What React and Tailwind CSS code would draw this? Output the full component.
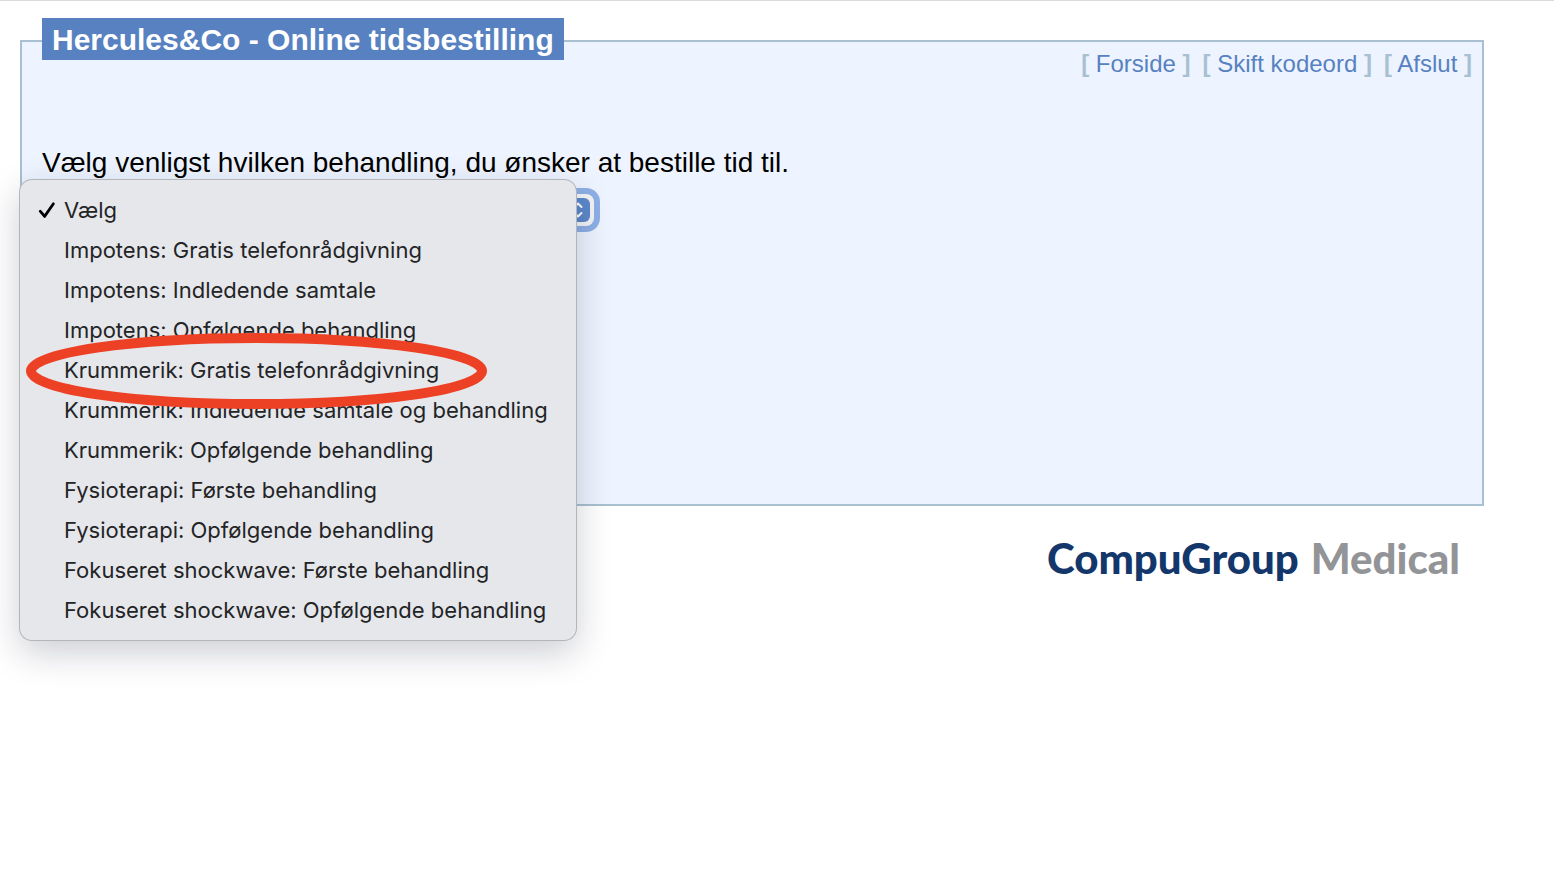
import { useState } from "react";

const treatments = [
  "Vælg",
  "Impotens: Gratis telefonrådgivning",
  "Impotens: Indledende samtale",
  "Impotens: Opfølgende behandling",
  "Krummerik: Gratis telefonrådgivning",
  "Krummerik: Indledende samtale og behandling",
  "Krummerik: Opfølgende behandling",
  "Fysioterapi: Første behandling",
  "Fysioterapi: Opfølgende behandling",
  "Fokuseret shockwave: Første behandling",
  "Fokuseret shockwave: Opfølgende behandling",
];

const highlighted = "Krummerik: Gratis telefonrådgivning";

const NavLink = ({ children }) => (
  <span className="text-[#a8c0d0]">
    <b>[</b>{" "}
    <a href="#" className="text-[#5781c0]">
      {children}
    </a>{" "}
    <b>]</b>
  </span>
);

const TreatmentMenu = ({ selected, onSelect }) => (
  <div
    role="listbox"
    aria-label="Behandling"
    className="absolute -left-[22px] -top-[14px] w-[556px] rounded-xl bg-[#e6e7eb] py-[10px] font-['Inter',sans-serif] text-[22px] text-[#232426] shadow-[0_0_0_1px_#b3b5ba,0_12px_36px_0_rgba(20,25,50,0.22)]"
  >
    {treatments.map((name) => (
      <button
        key={name}
        type="button"
        role="option"
        aria-selected={name === selected}
        onClick={() => onSelect(name)}
        className="relative flex h-10 w-full items-center pl-[18px] text-left whitespace-nowrap"
      >
        <span className="w-[26px] shrink-0">
          {name === selected && (
            <svg
              viewBox="0 0 18 18"
              className="h-[18px] w-[18px]"
              fill="none"
              stroke="#000"
              strokeWidth="2.8"
              strokeLinecap="round"
              strokeLinejoin="round"
            >
              <path d="M2.2 10.2 6.6 15.4 15.4 2.8" />
            </svg>
          )}
        </span>
        {name}
        {name === highlighted && (
          <svg
            viewBox="0 0 462 76"
            className="pointer-events-none absolute left-[6px] -top-[17px] z-10 h-[76px] w-[462px]"
          >
            <ellipse
              cx="230.5"
              cy="38"
              rx="225.5"
              ry="33"
              fill="none"
              stroke="#ed4126"
              strokeWidth="10"
            />
          </svg>
        )}
      </button>
    ))}
  </div>
);

const App = () => {
  const [selected, setSelected] = useState("Vælg");

  return (
    <div className="min-h-screen border-t border-[#d9d9de] bg-white pr-[70px] pl-5 font-['Liberation_Sans',Arial,sans-serif] text-black">
      <main className="mt-[39px] border-2 border-[#a8c0d0] bg-[#edf4ff] pb-[278px] pl-5">
        <header className="flex items-start justify-between pr-[10px]">
          <h1 className="-mt-6 bg-[#5781c0] px-[10px] pt-[2px] text-[30px] leading-10 font-bold whitespace-nowrap text-white">
            Hercules&amp;Co - Online tidsbestilling
          </h1>
          <nav className="mt-2 flex gap-3 text-2xl leading-7 whitespace-nowrap">
            <NavLink>Forside</NavLink>
            <NavLink>Skift kodeord</NavLink>
            <NavLink>Afslut</NavLink>
          </nav>
        </header>

        <label
          htmlFor="treatment"
          className="mt-[67px] block text-[28px] leading-9"
        >
          Vælg venligst hvilken behandling, du ønsker at bestille tid til.
        </label>

        <div className="relative mt-[13px] w-[552px]">
          <select
            id="treatment"
            value={selected}
            onChange={(e) => setSelected(e.target.value)}
            className="block h-8 w-full appearance-none rounded-lg bg-[#f4f4f6] pl-3 text-[22px] ring-6 ring-[#8db0e6] outline-none"
          >
            {treatments.map((name) => (
              <option key={name}>{name}</option>
            ))}
          </select>
          <span className="pointer-events-none absolute top-1 right-1 flex h-6 w-6 items-center justify-center rounded-md bg-[#5c88cb]">
            <svg
              viewBox="0 0 12 18"
              className="h-[18px] w-3"
              fill="none"
              stroke="#fff"
              strokeWidth="2"
              strokeLinecap="round"
              strokeLinejoin="round"
            >
              <path d="M2.5 6 6 2.5 9.5 6M2.5 12 6 15.5 9.5 12" />
            </svg>
          </span>
          <TreatmentMenu selected={selected} onSelect={setSelected} />
        </div>
      </main>

      <footer className="mt-7 flex justify-end pr-6 font-['Lato',sans-serif] text-[42px] leading-[48px] font-black whitespace-nowrap">
        <span className="text-[#14376b]">CompuGroup</span>
        <span className="ml-3 text-[#929497]">Medical</span>
      </footer>
    </div>
  );
};

export default App;
